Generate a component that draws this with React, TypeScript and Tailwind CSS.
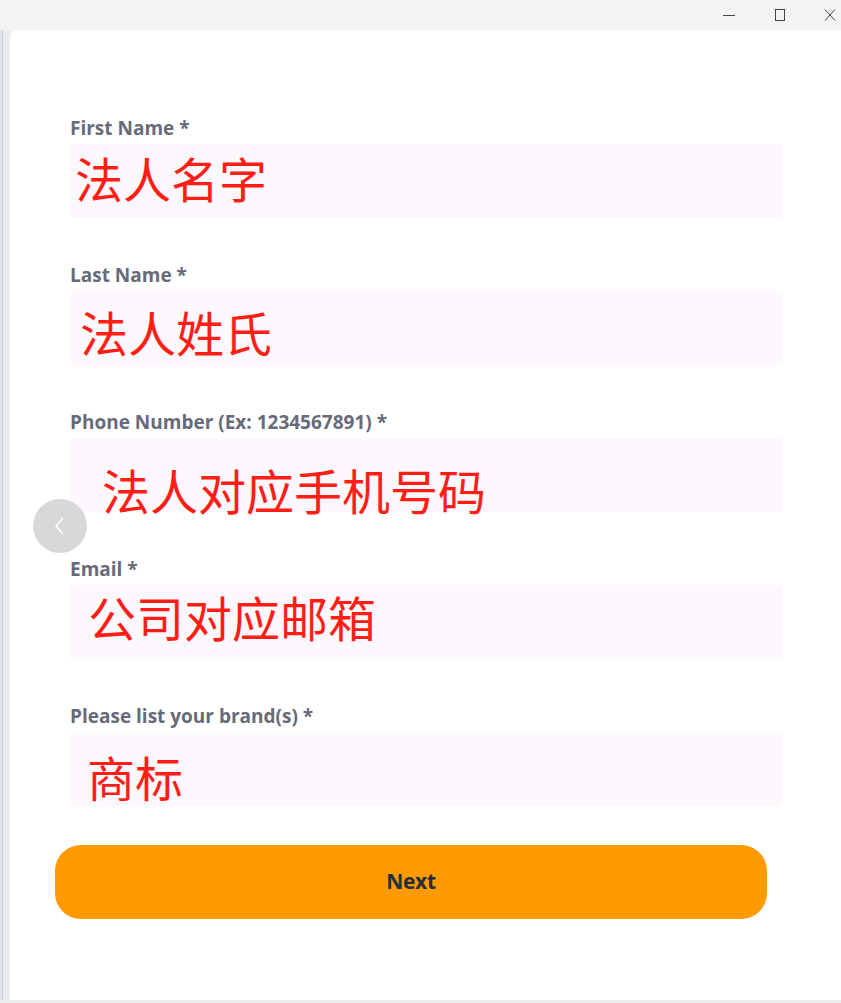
import React from 'react';

interface Field {
  label: string;
  value: string;
  pad: string;
}

const fields: Field[] = [
  { label: 'First Name *', value: '法人名字', pad: 'pl-[5px] pt-[9px]' },
  { label: 'Last Name *', value: '法人姓氏', pad: 'pl-[10px] pt-[16px]' },
  { label: 'Phone Number (Ex: 1234567891) *', value: '法人对应手机号码', pad: 'pl-[32px] pt-[27px]' },
  { label: 'Email *', value: '公司对应邮箱', pad: 'pl-[18px] pt-[7px]' },
  { label: 'Please list your brand(s) *', value: '商标', pad: 'pl-[17px] pt-[20px]' },
];

const TitleBar = () => (
  <div className="h-[30px] flex items-center justify-end shrink-0">
    <svg width="14" height="14" viewBox="0 0 14 14" className="mr-[37px]">
      <path d="M1 7.5h12" stroke="#444" strokeWidth="1" />
    </svg>
    <svg width="14" height="14" viewBox="0 0 14 14" className="mr-[36px]">
      <rect x="2.5" y="1.5" width="9" height="11" fill="none" stroke="#444" strokeWidth="1" />
    </svg>
    <svg width="14" height="14" viewBox="0 0 14 14" className="mr-[4px]">
      <path d="M2 1.5l10 11M12 1.5l-10 11" stroke="#444" strokeWidth="1" />
    </svg>
  </div>
);

export default function App() {
  return (
    <div className="w-[841px] h-[1003px] bg-[#f3f3f3] flex flex-col overflow-hidden" style={{ fontFamily: '"Open Sans", "Noto Sans", sans-serif' }}>
      <TitleBar />
      <div className="flex flex-1 min-h-0">
        <div className="w-[10px] shrink-0 flex">
          <div className="w-[2px] bg-[#e4e6e9]" />
          <div className="w-[1px] bg-[#c9ced4]" />
          <div className="flex-1 bg-[#e6eef3]" />
        </div>
        <div className="flex-1 bg-white rounded-tl-[8px] relative pl-[60px] pr-[58px] pt-[88px]">
          <div className="flex flex-col gap-[47px]">
            {fields.map((f) => (
              <div key={f.label} className="flex flex-col">
                <label className="text-[19px] leading-[20px] font-bold text-[#676b79] mb-[6px]">
                  {f.label}
                </label>
                <div className={`h-[74px] bg-[#fdf8fd] rounded-[4px] ${f.pad}`}>
                  <span
                    className="block text-[48px] leading-none text-[#ff1e16] whitespace-nowrap"
                    style={{ fontFamily: '"Noto Sans CJK SC", sans-serif' }}
                  >
                    {f.value}
                  </span>
                </div>
              </div>
            ))}
          </div>
          <button className="mt-[39px] -ml-[15px] w-[712px] h-[74px] rounded-[26px] bg-[#ff9a00] text-[21px] font-bold text-[#232f3e] tracking-[-0.3px]">
            Next
          </button>
          <div className="absolute left-[23px] top-[469px] w-[54px] h-[54px] rounded-full bg-[#d8d8d8] flex items-center justify-center">
            <svg width="16" height="24" viewBox="0 0 16 24">
              <path d="M11 4L4 12l7 8" fill="none" stroke="#ffffff" strokeWidth="1.5" />
            </svg>
          </div>
        </div>
      </div>
      <div className="h-[3px] bg-[#ececec] shrink-0" />
    </div>
  );
}
